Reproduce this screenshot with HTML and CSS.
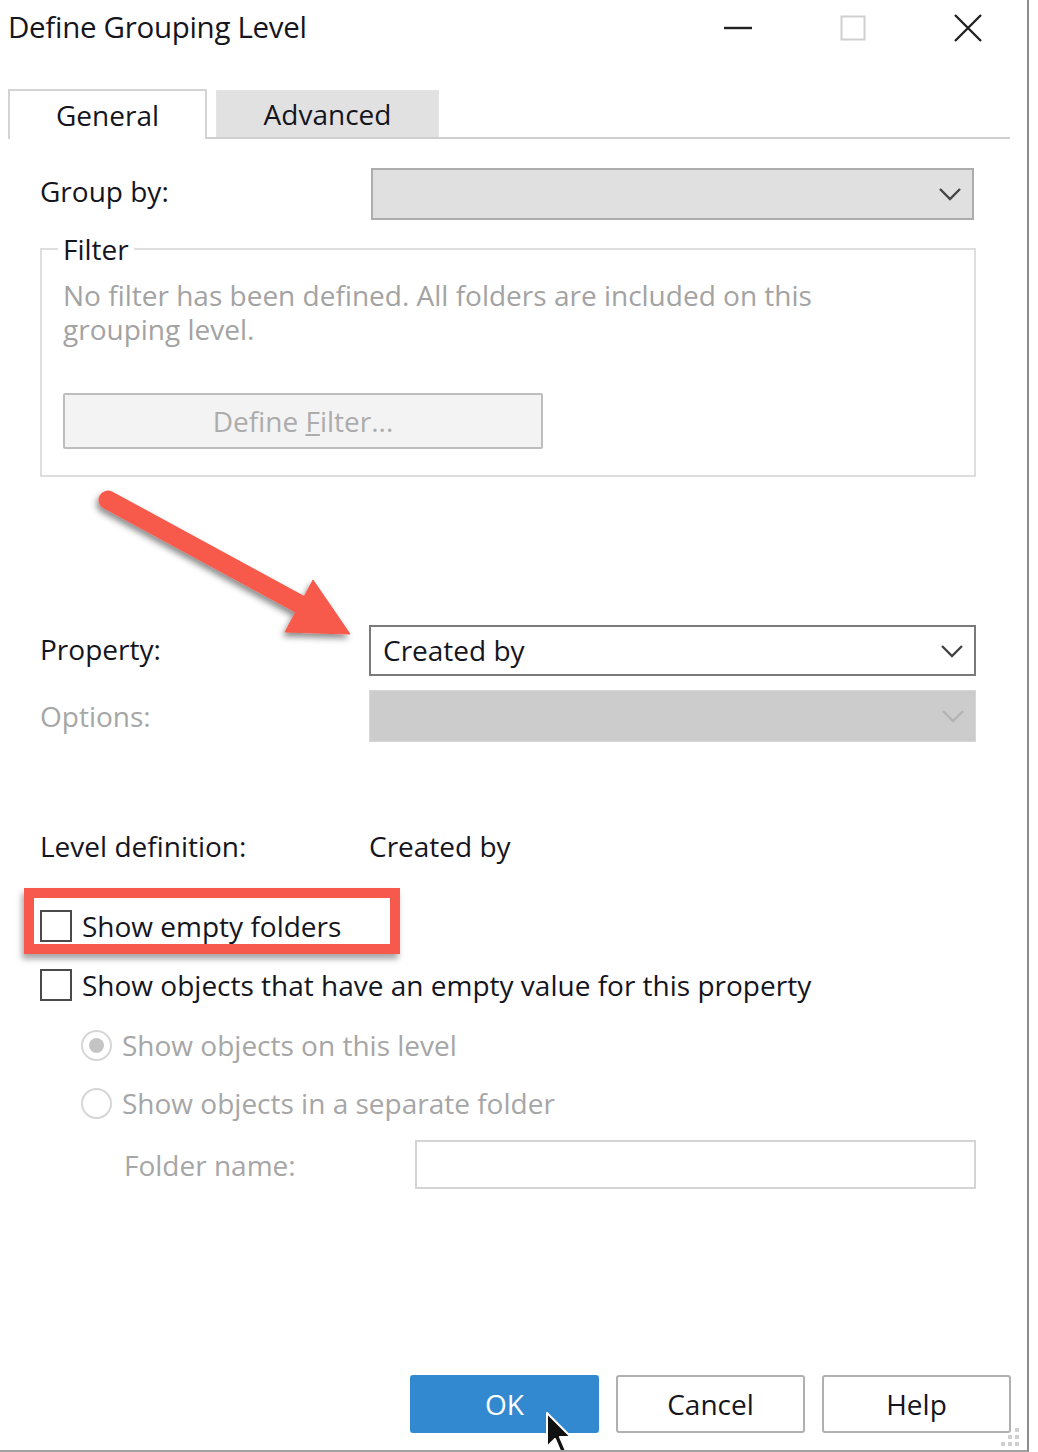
FILE: index.html
```html
<!DOCTYPE html>
<html lang="en">
<head>
    <meta charset="UTF-8">
    <meta name="viewport" content="width=device-width, initial-scale=1.0">
    <title>Define Grouping Level</title>
    <link rel="stylesheet" href="styles.css">
</head>
<body>
    <div class="window">
        <div class="titlebar">
            <span class="title">Define Grouping Level</span>
            <div class="controls">
                <span class="ctl">
                    <svg width="30" height="4" viewBox="0 0 30 4"><line x1="1" y1="2" x2="29" y2="2" stroke="#222" stroke-width="2.4"/></svg>
                </span>
                <span class="ctl">
                    <svg width="26" height="26" viewBox="0 0 26 26"><rect x="1.5" y="1.5" width="23" height="23" fill="none" stroke="#cfcfcf" stroke-width="2"/></svg>
                </span>
                <span class="ctl">
                    <svg width="30" height="30" viewBox="0 0 30 30"><path d="M2 2 L28 28 M28 2 L2 28" stroke="#222" stroke-width="2.4" fill="none"/></svg>
                </span>
            </div>
        </div>

        <div class="tabs">
            <div class="tab active">General</div>
            <div class="tab">Advanced</div>
        </div>

        <div class="panel">
            <div class="row row-groupby">
                <span class="label">Group by:</span>
                <div class="select select-idle">
                    <span class="select-text"></span>
                    <svg class="chevron" width="24" height="14" viewBox="0 0 24 14"><polyline points="2,2 12,12 22,2" fill="none" stroke="#444" stroke-width="2.4"/></svg>
                </div>
            </div>

            <fieldset class="filter">
                <legend>Filter</legend>
                <p class="filter-note">No filter has been defined. All folders are included on this grouping level.</p>
                <button class="btn-filter" disabled>Define <u>F</u>ilter...</button>
            </fieldset>

            <div class="row row-property">
                <span class="label">Property:</span>
                <div class="select select-active">
                    <span class="select-text">Created by</span>
                    <svg class="chevron" width="24" height="14" viewBox="0 0 24 14"><polyline points="2,2 12,12 22,2" fill="none" stroke="#444" stroke-width="2.4"/></svg>
                </div>
            </div>

            <div class="row row-options">
                <span class="label muted">Options:</span>
                <div class="select select-disabled">
                    <span class="select-text"></span>
                    <svg class="chevron" width="24" height="14" viewBox="0 0 24 14"><polyline points="2,2 12,12 22,2" fill="none" stroke="#b4b4b4" stroke-width="2.4"/></svg>
                </div>
            </div>

            <div class="row row-level">
                <span class="label">Level definition:</span>
                <span class="value">Created by</span>
            </div>

            <label class="check check-first"><span class="box"></span>Show empty folders</label>
            <label class="check"><span class="box"></span>Show objects that have an empty value for this property</label>

            <label class="radio radio-first muted"><span class="dot checked"></span>Show objects on this level</label>
            <label class="radio muted"><span class="dot"></span>Show objects in a separate folder</label>

            <div class="row row-folder">
                <span class="label muted">Folder name:</span>
                <div class="textbox"></div>
            </div>
        </div>

        <div class="buttons">
            <button class="btn btn-primary">OK</button>
            <button class="btn">Cancel</button>
            <button class="btn">Help</button>
        </div>

        <!-- annotations drawn over the dialog -->
        <svg class="arrow" width="290" height="180" viewBox="0 0 290 180">
            <defs>
                <filter id="shadow" x="-20%" y="-20%" width="140%" height="140%">
                    <feDropShadow dx="-2" dy="4" stdDeviation="3" flood-color="#000" flood-opacity="0.45"/>
                </filter>
            </defs>
            <g filter="url(#shadow)" fill="#f75a4c" stroke="#f75a4c">
                <line x1="20" y1="20" x2="215" y2="126" stroke-width="19" stroke-linecap="round"/>
                <polygon points="225,100 262,154 197,152" stroke-width="1" stroke-linejoin="miter"/>
            </g>
        </svg>

        <div class="highlight"></div>

        <svg class="cursor" width="30" height="44" viewBox="0 0 30 44">
            <path d="M2 2 L2 36 L10 28 L16 42 L21 40 L15 26 L26 26 Z" fill="#111" stroke="#fff" stroke-width="2" stroke-linejoin="round"/>
        </svg>

        <svg class="grip" width="22" height="22" viewBox="0 0 22 22">
            <g fill="#cfcfcf">
                <rect x="16" y="2" width="4" height="4"/>
                <rect x="9" y="9" width="4" height="4"/><rect x="16" y="9" width="4" height="4"/>
                <rect x="2" y="16" width="4" height="4"/><rect x="9" y="16" width="4" height="4"/><rect x="16" y="16" width="4" height="4"/>
            </g>
        </svg>
    </div>
</body>
</html>
```

FILE: styles.css
```css
body {
    margin: 0;
    background: #fff;
    color: #15151d;
    font-family: "Open Sans", "Noto Sans", sans-serif;
    font-size: 28px;
}
.window {
    position: relative;
    width: 1027px;
    height: 1450px;
    border-right: 2px solid #8c8c8c;
    border-bottom: 2px solid #a0a0a0;
    display: flex;
    flex-direction: column;
    overflow: hidden;
}

/* title bar */
.titlebar {
    height: 55px;
    display: flex;
    align-items: center;
}
.title {
    padding-left: 8px;
    font-size: 29.5px;
    letter-spacing: -0.3px;
    margin-top: -2px;
}
.controls {
    margin-left: auto;
    display: flex;
    margin-right: 2px;
}
.ctl {
    width: 115px;
    height: 55px;
    display: flex;
    align-items: center;
    justify-content: center;
}

/* tabs */
.tabs {
    display: flex;
    align-items: flex-end;
    height: 48px;
    margin: 34px 17px 0 8px;
    border-bottom: 2px solid #cfcfcf;
}
.tab {
    box-sizing: border-box;
    display: flex;
    align-items: center;
    justify-content: center;
    width: 223px;
    height: 47px;
    margin-left: 9px;
    background: #e1e1e1;
    border: 1px solid #e4e4e4;
    border-bottom: none;
}
.tab.active {
    width: 199px;
    height: 50px;
    margin: 0 0 -2px 0;
    background: #fff;
    border: 2px solid #d4d4d4;
    border-bottom: none;
}

/* main panel */
.panel {
    padding: 0 51px 0 40px;
}
.row {
    display: grid;
    grid-template-columns: 329px 1fr;
    align-items: center;
}
.label {
    line-height: 34px;
}
.muted {
    color: #a6a6a6;
}
.select {
    box-sizing: border-box;
    height: 52px;
    display: flex;
    align-items: center;
    padding: 0 10px 0 12px;
}
.select-text {
    flex: 1;
    margin-top: -2px;
}
.chevron {
    display: block;
}
.row-groupby {
    margin-top: 29px;
}
.row-groupby .label {
    margin-top: -6px;
}
.select-idle {
    margin: 0 2px;
    background: #e0e0e0;
    border: 2px solid #adadad;
}
.select-active {
    height: 51px;
    background: #fff;
    border: 2px solid #7a7a7a;
}
.select-disabled {
    background: #cccccc;
    border: 1px solid #d6d6d6;
}

/* filter group */
.filter {
    margin: 12px 0 0 0;
    padding: 0 22px 26px 21px;
    border: 2px solid #dedede;
}
.filter legend {
    padding: 0 5px;
    margin-left: -5px;
    line-height: 34px;
}
.filter-note {
    margin: 12px 0 0 0;
    max-width: 800px;
    line-height: 34px;
    color: #a3a3a3;
}
.btn-filter {
    display: block;
    width: 480px;
    height: 56px;
    margin-top: 47px;
    font: inherit;
    color: #acacac;
    background: #f3f3f3;
    border: 2px solid #bdbdbd;
    border-radius: 2px;
}

.row-property {
    margin-top: 148px;
}
.row-property .label {
    margin-top: -4px;
}
.row-options {
    margin-top: 14px;
}
.row-level {
    margin-top: 89px;
    line-height: 34px;
}
.row-level .label, .row-level .value {
    margin-top: -2px;
}

/* check boxes and radios */
.check, .radio {
    display: flex;
    align-items: center;
    line-height: 34px;
}
.check {
    margin-top: 25px;
}
.check-first {
    margin-top: 46px;
}
.box {
    box-sizing: border-box;
    flex: none;
    width: 32px;
    height: 32px;
    margin-right: 10px;
    border: 2px solid #4a4a4a;
    background: #fff;
}
.radio {
    margin: 24px 0 0 41px;
}
.radio-first {
    margin-top: 26px;
}
.dot {
    box-sizing: border-box;
    flex: none;
    width: 31px;
    height: 31px;
    margin-right: 10px;
    border: 2px solid #d6d6d6;
    border-radius: 50%;
    display: flex;
    align-items: center;
    justify-content: center;
}
.dot.checked::after {
    content: "";
    width: 15px;
    height: 15px;
    border-radius: 50%;
    background: #c4c4c4;
}
.row-folder {
    margin-top: 20px;
    padding-left: 84px;
    grid-template-columns: 291px 1fr;
}
.textbox {
    box-sizing: border-box;
    height: 49px;
    border: 2px solid #d4d4d4;
}

/* bottom buttons */
.buttons {
    margin-top: auto;
    padding: 0 16px 17px 0;
    display: flex;
    justify-content: flex-end;
    gap: 17px;
}
.btn {
    box-sizing: border-box;
    width: 189px;
    height: 58px;
    font: inherit;
    color: #15151d;
    background: #fff;
    border: 2px solid #b0b0b0;
    border-radius: 3px;
}
.btn-primary {
    color: #fff;
    background: #3389cf;
    border-color: #3389cf;
}

/* annotations */
.arrow {
    position: absolute;
    left: 88px;
    top: 480px;
}
.highlight {
    position: absolute;
    left: 24px;
    top: 888px;
    width: 376px;
    height: 66px;
    box-sizing: border-box;
    border: 10px solid #f75a4c;
    box-shadow: -2px 5px 6px rgba(0, 0, 0, 0.35);
}
.cursor {
    position: absolute;
    left: 545px;
    top: 1411px;
}
.grip {
    position: absolute;
    right: 6px;
    bottom: 2px;
}
```
